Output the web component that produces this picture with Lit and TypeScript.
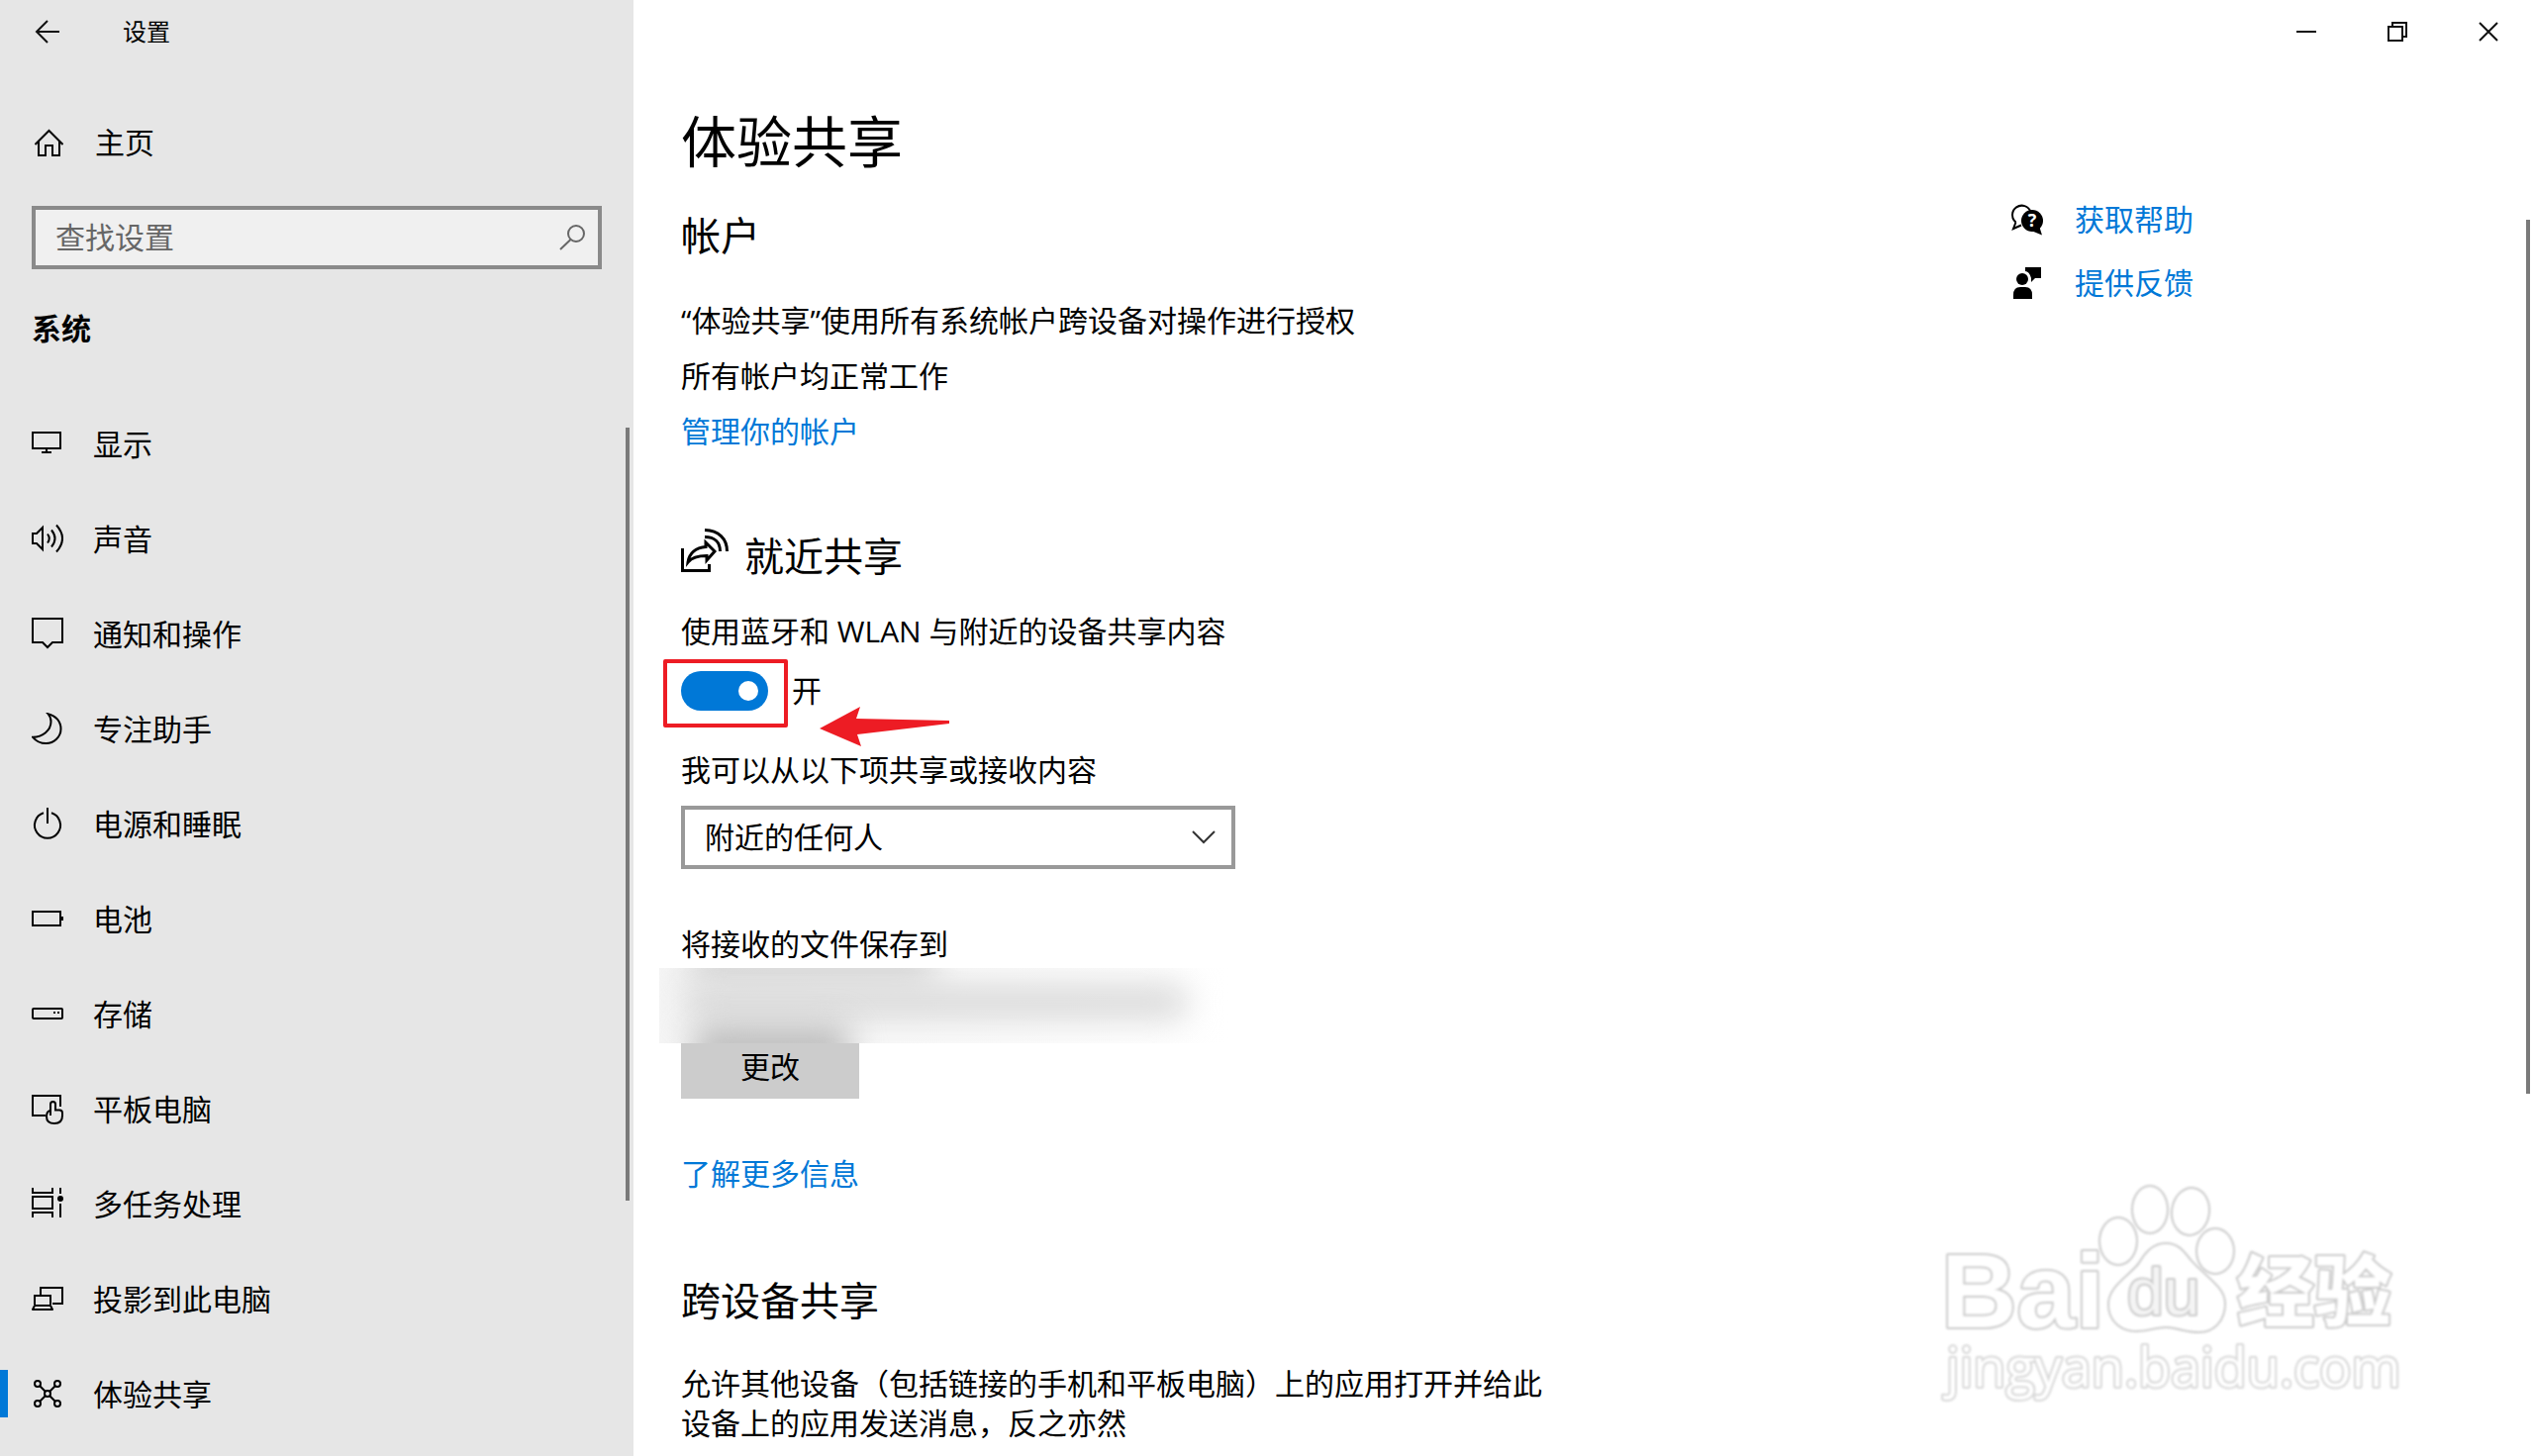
import { LitElement, html, css, svg } from "lit";
import { customElement, state } from "lit/decorators.js";
import { classMap } from "lit/directives/class-map.js";

const navIcons = {
  display: svg`<rect x="1" y="5" width="28" height="16"/><path d="M15 21V25M10 25H20"/>`,
  sound: svg`<path d="M1 11H5L11 5V27L5 21H1Z"/><path d="M16 11.500Q19.500 16 16 20.500M20 7.500Q27 16 20 24.500M25 2.500Q37 16 25 29.500"/>`,
  notify: svg`<path d="M1 1H31V25H21L16 30L11 25H1Z"/>`,
  focus: svg`<path d="M16.500 1.200C24.500 3 29.500 9 29.500 16.500C29.500 24.500 22.500 31 14.500 31C9 31 4.500 28.800 1.200 24.800C11 24.500 19.500 18 19.500 9C19.500 6 18.300 3.200 16.500 1.200Z"/>`,
  power: svg`<path d="M12 5.300A13 13 0 1 0 20 5.300M16 0V16"/>`,
  battery: svg`<rect x="1" y="9" width="28" height="14"/><rect x="30" y="14" width="2" height="4" fill="currentColor" stroke="none"/>`,
  storage: svg`<rect x="1" y="11" width="30" height="10" rx="1"/><path d="M22 15H24M26 15H28"/>`,
  tablet: svg`<path d="M14 23H1V3H29V14"/><path d="M19 23V11.500a2.500 2.500 0 0 1 5 0V17.500H28Q31 17.500 31 20.500V23Q31 31 23 31T15 24Q15 19 18.500 18"/>`,
  multitask: svg`<path d="M1 0V5H21V0M1 30V25H21V30M29 0V6M29 16V30"/><rect x="1" y="9" width="20" height="12"/><circle cx="29" cy="11" r="3" fill="currentColor" stroke="none"/>`,
  project: svg`<path d="M9 12V5H31V21H21"/><path d="M3 22V13H19V22"/><path d="M3 23H19L21 27H1Z" stroke-linejoin="round"/>`,
  share: svg`<circle cx="6" cy="6" r="3"/><circle cx="26" cy="6" r="3"/><circle cx="16" cy="16" r="3"/><circle cx="6" cy="26" r="3"/><circle cx="26" cy="26" r="3"/><path d="M8 8L14 14M24 8L18 14M8 24L14 18M24 24L18 18"/>`,
};

const navItems: { id: keyof typeof navIcons; label: string }[] = [
  { id: "display", label: "显示" },
  { id: "sound", label: "声音" },
  { id: "notify", label: "通知和操作" },
  { id: "focus", label: "专注助手" },
  { id: "power", label: "电源和睡眠" },
  { id: "battery", label: "电池" },
  { id: "storage", label: "存储" },
  { id: "tablet", label: "平板电脑" },
  { id: "multitask", label: "多任务处理" },
  { id: "project", label: "投影到此电脑" },
  { id: "share", label: "体验共享" },
];

const fontStack = css`"Open Sans", "Noto Sans CJK SC", sans-serif`;

@customElement("settings-sidebar")
export class SettingsSidebar extends LitElement {
  @state() private current = "share";

  static styles = css`
    :host {
      display: block;
      background: #e6e6e6;
      color: #000;
      font-family: ${fontStack};
      font-size: 30px;
      line-height: 40px;
    }
    svg {
      display: block;
      flex: none;
      fill: none;
      stroke: currentColor;
      stroke-width: 2;
    }
    .bar {
      display: flex;
      align-items: center;
      height: 64px;
      padding-left: 32px;
      gap: 60px;
      font-size: 24px;
    }
    .back {
      border: 0;
      padding: 0;
      background: none;
      color: #111;
    }
    .home {
      display: flex;
      align-items: center;
      gap: 32px;
      height: 48px;
      margin: 56px 32px 40px;
      color: inherit;
      text-decoration: none;
    }
    .search {
      display: flex;
      align-items: center;
      box-sizing: border-box;
      height: 64px;
      margin: 0 32px 40px;
      padding: 0 8px 0 20px;
      border: 4px solid #8a8a8a;
      background: #f0f0f0;
      color: #666;
    }
    .search input {
      flex: 1;
      min-width: 0;
      border: 0;
      padding: 0;
      background: none;
      outline: 0;
      font: inherit;
      color: #000;
    }
    .search input::placeholder {
      color: #666;
      opacity: 1;
    }
    .group {
      margin: 0 32px 48px;
      font-size: 30px;
      font-weight: 700;
    }
    .nav {
      position: relative;
    }
    .list {
      margin: 0;
      padding: 0;
      list-style: none;
    }
    .item {
      display: flex;
      align-items: center;
      gap: 30px;
      height: 96px;
      padding-left: 32px;
      color: inherit;
      text-decoration: none;
      position: relative;
    }
    .item.current::before {
      content: "";
      position: absolute;
      left: 0;
      top: 24px;
      width: 8px;
      height: 48px;
      background: #0078d7;
    }
    .item span {
      padding-top: 2px;
    }
    .thumb {
      position: absolute;
      right: 4px;
      top: 32px;
      width: 4px;
      height: 74%;
      background: #7a7a7a;
    }
  `;

  render() {
    return html`
      <div class="bar">
        <button class="back" aria-label="返回">
          <svg width="32" height="32" viewBox="0 0 32 32"><path d="M28 16H5M16 5L5 16L16 27"/></svg>
        </button>
        <span>设置</span>
      </div>
      <a class="home" href="#home">
        <svg width="32" height="32" viewBox="0 0 32 32"><path d="M3.500 18L17.500 4L31.500 18M7 15V29H14V19H21V29H28V15"/></svg>
        <span>主页</span>
      </a>
      <label class="search">
        <input type="text" placeholder="查找设置" aria-label="查找设置" />
        <svg width="32" height="32" viewBox="0 0 32 32"><circle cx="18" cy="12" r="8"/><path d="M12.500 18L2 28"/></svg>
      </label>
      <h2 class="group">系统</h2>
      <nav class="nav">
        <ul class="list">
          ${navItems.map(
            (item) => html`<li>
              <a
                class=${classMap({ item: true, current: item.id === this.current })}
                href="#${item.id}"
                @click=${() => (this.current = item.id)}
              >
                <svg width="32" height="32" viewBox="0 0 32 32">${navIcons[item.id]}</svg>
                <span>${item.label}</span>
              </a>
            </li>`
          )}
        </ul>
        <div class="thumb"></div>
      </nav>
    `;
  }
}

@customElement("baidu-watermark")
export class BaiduWatermark extends LitElement {
  static styles = css`
    :host {
      display: block;
    }
    svg {
      display: block;
    }
    .outline {
      fill: #fff;
      stroke: #ccc;
      stroke-width: 4;
      stroke-linejoin: round;
      paint-order: stroke;
      filter: blur(1px);
    }
    .word {
      font-family: "Liberation Sans", sans-serif;
      font-weight: 700;
      font-size: 106px;
    }
    .du {
      font-family: "Liberation Sans", sans-serif;
      font-size: 66px;
      fill: #f4f4f4;
    }
    .cn {
      font-family: "Noto Sans CJK SC", sans-serif;
      font-weight: 900;
      font-size: 78px;
    }
    .url {
      font-family: "Open Sans", sans-serif;
      font-size: 54px;
      stroke: #d8d8d8;
    }
  `;

  render() {
    return html`<svg width="480" height="240" viewBox="0 0 480 240" aria-hidden="true">
      <g class="outline">
        <ellipse cx="190" cy="64" rx="18" ry="23"/>
        <ellipse cx="222" cy="32" rx="17" ry="23"/>
        <ellipse cx="263" cy="34" rx="18" ry="23" transform="rotate(8 263 34)"/>
        <ellipse cx="288" cy="74" rx="18" ry="22"/>
        <path d="M238 67C226 67 219 75 214 83C206 98 181 108 181 128C181 144 193 154 208 154C220 154 228 150 238 150C248 150 258 155 272 155C287 155 297 143 297 127C297 111 280 103 262 83C255 74 250 67 238 67Z"/>
      </g>
      <text class="outline word" x="11" y="151">Bai</text>
      <text class="outline du" x="199" y="138">du</text>
      <text class="outline cn" x="310" y="144">经验</text>
      <text class="outline url" x="16" y="211">jingyan.baidu.com</text>
    </svg>`;
  }
}

@customElement("app-root")
export class AppRoot extends LitElement {
  @state() private sharing = true;

  static styles = css`
    :host {
      display: grid;
      grid-template-columns: 25% 1fr;
      min-height: 100vh;
      background: #fff;
      color: #000;
      font-family: ${fontStack};
      font-size: 30px;
      line-height: 40px;
    }
    svg {
      display: block;
      flex: none;
    }
    h1,
    h2,
    p {
      margin: 0;
      font-weight: 400;
    }
    h1 {
      font-size: 56px;
      line-height: 72px;
    }
    h2 {
      font-size: 40px;
      line-height: 56px;
    }
    a {
      color: #0078d7;
      text-decoration: none;
    }
    .main {
      position: relative;
    }
    .controls {
      display: flex;
      justify-content: flex-end;
      height: 64px;
    }
    .control {
      display: grid;
      place-items: center;
      width: 92px;
      border: 0;
      padding: 0;
      background: none;
    }
    .control svg {
      fill: none;
      stroke: #111;
      stroke-width: 2;
    }
    .body {
      display: grid;
      grid-template-columns: 1fr 528px;
      padding: 42px 0 0 48px;
    }
    .content {
      display: flex;
      flex-direction: column;
      align-items: flex-start;
    }
    .account {
      display: flex;
      flex-direction: column;
      gap: 16px;
      margin: 38px 0 78px;
    }
    .title {
      margin-bottom: 32px;
    }
    .nearby {
      display: flex;
      gap: 16px;
      margin-bottom: 28px;
    }
    .nearby svg {
      fill: none;
      stroke: #000;
      stroke-width: 3;
    }
    .switch {
      position: relative;
      display: flex;
      align-items: center;
      gap: 24px;
      margin: 20px 0 40px;
    }
    .toggle {
      appearance: none;
      display: flex;
      align-items: center;
      box-sizing: border-box;
      width: 88px;
      height: 40px;
      margin: 0;
      padding: 0 10px;
      border-radius: 20px;
      background: #999;
    }
    .toggle::before {
      content: "";
      width: 20px;
      height: 20px;
      border-radius: 50%;
      background: #fff;
    }
    .toggle:checked {
      justify-content: flex-end;
      background: #0078d7;
    }
    .mark {
      position: absolute;
      left: -18px;
      top: -12px;
      box-sizing: border-box;
      width: 126px;
      height: 69px;
      border: 4px solid #ed1c24;
      border-radius: 2px;
      pointer-events: none;
    }
    .arrow {
      position: absolute;
      left: 140px;
      top: 35px;
      fill: #ed1c24;
      pointer-events: none;
    }
    .picker {
      position: relative;
      margin: 16px 0 56px;
    }
    .picker select {
      appearance: none;
      display: block;
      box-sizing: border-box;
      width: 560px;
      height: 64px;
      padding: 0 64px 0 20px;
      border: 4px solid #999;
      border-radius: 0;
      background: #fff;
      color: #000;
      font: inherit;
    }
    .chevron {
      position: absolute;
      right: 20px;
      top: 24px;
      fill: none;
      stroke: #333;
      stroke-width: 2;
      pointer-events: none;
    }
    .folder {
      position: relative;
      padding-top: 72px;
      margin-bottom: 56px;
    }
    .redacted {
      position: absolute;
      left: -22px;
      top: 4px;
      width: 600px;
      height: 76px;
      overflow: hidden;
      background: linear-gradient(90deg, #f5f5f5, #f8f8f8 30%, #fff 96%);
    }
    .smudge {
      position: absolute;
      border-radius: 16px;
      filter: blur(16px);
    }
    .smudge.name {
      left: 30px;
      top: -20px;
      width: 250px;
      height: 34px;
      background: #d0d0d0;
    }
    .smudge.path {
      left: 24px;
      top: 16px;
      width: 510px;
      height: 36px;
      background: #dadada;
    }
    .smudge.edge {
      left: 34px;
      top: 58px;
      width: 160px;
      height: 44px;
      background: #bcbcbc;
    }
    .change {
      display: block;
      width: 180px;
      height: 64px;
      border: 0;
      padding: 0;
      background: #ccc;
      color: #000;
      font: inherit;
    }
    .more {
      margin-bottom: 80px;
    }
    .cross {
      max-width: 880px;
      margin-top: 36px;
    }
    .aside {
      display: flex;
      flex-direction: column;
      gap: 24px;
      padding-top: 96px;
    }
    .aside a {
      display: flex;
      align-items: center;
      gap: 32px;
    }
    .aside svg {
      color: #000;
    }
    .q {
      font: 700 18px "Open Sans", sans-serif;
      fill: #fff;
      text-anchor: middle;
    }
    .thumb {
      position: absolute;
      right: 4px;
      top: 222px;
      width: 4px;
      height: 60%;
      background: #7a7a7a;
    }
    .watermark {
      position: absolute;
      right: 130px;
      bottom: 41px;
      pointer-events: none;
    }
  `;

  render() {
    return html`
      <settings-sidebar></settings-sidebar>
      <main class="main">
        <div class="controls">
          <button class="control" aria-label="最小化">
            <svg width="20" height="20" viewBox="0 0 20 20"><path d="M0 10H20"/></svg>
          </button>
          <button class="control" aria-label="还原">
            <svg width="20" height="20" viewBox="0 0 20 20"><rect x="1" y="5" width="14" height="14"/><path d="M5 5V1H19V15H15"/></svg>
          </button>
          <button class="control" aria-label="关闭">
            <svg width="20" height="20" viewBox="0 0 20 20"><path d="M1 1L19 19M19 1L1 19"/></svg>
          </button>
        </div>
        <div class="body">
          <div class="content">
            <h1 class="title">体验共享</h1>
            <h2>帐户</h2>
            <div class="account">
              <p>“体验共享”使用所有系统帐户跨设备对操作进行授权</p>
              <p>所有帐户均正常工作</p>
              <a href="#accounts">管理你的帐户</a>
            </div>
            <div class="nearby">
              <svg width="48" height="48" viewBox="0 0 48 48">
                <path d="M1.500 20V42.500H28.500V36"/>
                <path d="M7 34C8 25 15 19 25 18.500V14L34 23L26 32V27.500C17 27.500 11 29 7 34Z"/>
                <path d="M24 8.500C34 8.500 39.500 14 39.500 23M24 1.500C38 2 46.500 10 46.500 23"/>
              </svg>
              <h2>就近共享</h2>
            </div>
            <p>使用蓝牙和 WLAN 与附近的设备共享内容</p>
            <div class="switch">
              <input
                class="toggle"
                id="sharing"
                type="checkbox"
                role="switch"
                .checked=${this.sharing}
                @change=${(e: Event) => (this.sharing = (e.target as HTMLInputElement).checked)}
              />
              <label for="sharing">${this.sharing ? "开" : "关"}</label>
              <div class="mark"></div>
              <svg class="arrow" width="132" height="42" viewBox="0 0 132 42">
                <path d="M0 23L41 1L37 13L131 15V18L38 29L42 41Z"/>
              </svg>
            </div>
            <label for="range">我可以从以下项共享或接收内容</label>
            <div class="picker">
              <select id="range">
                <option>附近的任何人</option>
                <option>仅我的设备</option>
              </select>
              <svg class="chevron" width="24" height="16" viewBox="0 0 24 16"><path d="M1 2L12 13L23 2"/></svg>
            </div>
            <p>将接收的文件保存到</p>
            <div class="folder">
              <button class="change">更改</button>
              <div class="redacted">
                <div class="smudge name"></div>
                <div class="smudge path"></div>
                <div class="smudge edge"></div>
              </div>
            </div>
            <a class="more" href="#more">了解更多信息</a>
            <h2>跨设备共享</h2>
            <p class="cross">允许其他设备（包括链接的手机和平板电脑）上的应用打开并给此设备上的应用发送消息，反之亦然</p>
          </div>
          <aside class="aside">
            <a href="#help">
              <svg width="32" height="32" viewBox="0 0 32 32">
                <path d="M4.500 18.500A9.500 9.500 0 1 1 19.500 8M4.500 18.500L2 25L10 21.500" fill="none" stroke="currentColor" stroke-width="2"/>
                <circle cx="21" cy="17" r="11" fill="currentColor"/>
                <path d="M20 27L31 31.500L28 22Z" fill="currentColor"/>
                <text class="q" x="21" y="23">?</text>
              </svg>
              <span>获取帮助</span>
            </a>
            <a href="#feedback">
              <svg width="32" height="32" viewBox="0 0 32 32">
                <path d="M14 0H30V11H24L20 15V11Q18 4 14 4Z" fill="currentColor"/>
                <circle cx="11" cy="12" r="6" fill="currentColor"/>
                <path d="M2 32V28Q2 20 9 20H14Q21 20 21 28V32Z" fill="currentColor"/>
              </svg>
              <span>提供反馈</span>
            </a>
          </aside>
        </div>
        <div class="thumb"></div>
        <baidu-watermark class="watermark"></baidu-watermark>
      </main>
    `;
  }
}
